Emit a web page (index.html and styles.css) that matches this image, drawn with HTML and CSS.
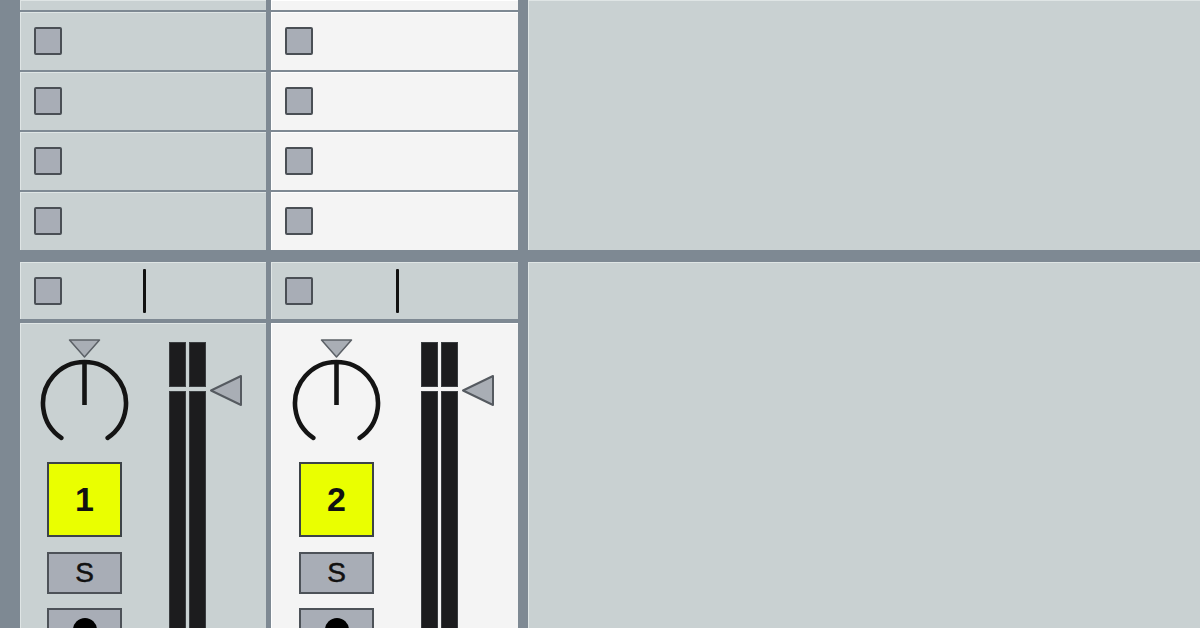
FILE: index.html
```html
<!DOCTYPE html>
<html lang="en">
<head>
  <meta charset="UTF-8">
  <meta name="viewport" content="width=device-width, initial-scale=1.0">
  <title>Session Mixer</title>
  <link rel="stylesheet" href="styles.css">
</head>
<body>
  <div class="session">

    <!-- Track 1 -->
    <div class="track">
      <div class="slots">
        <div class="slot slot-top"></div>
        <div class="slot"><span class="launch"></span></div>
        <div class="slot"><span class="launch"></span></div>
        <div class="slot"><span class="launch"></span></div>
        <div class="slot"><span class="launch"></span></div>
      </div>
      <div class="stop-row">
        <span class="launch"></span>
        <span class="stop-line"></span>
      </div>
      <div class="mixer">
        <div class="controls">
          <svg class="knob" width="92" height="104" viewBox="0 0 92 104">
            <polygon points="30.5,2 60.5,2 45.5,19" fill="#a9aeb5" stroke="#5b6066" stroke-width="1.5" stroke-linejoin="round"/>
            <path d="M 22.3 99.9 A 41.5 41.5 0 1 1 68.7 99.9" fill="none" stroke="#141414" stroke-width="4.6" stroke-linecap="round"/>
            <line x1="45.5" y1="22" x2="45.5" y2="67" stroke="#141414" stroke-width="4.6"/>
          </svg>
          <div class="track-num">1</div>
          <div class="btn">S</div>
          <div class="btn"><span class="rec-dot"></span></div>
        </div>
        <div class="meter-group">
          <div class="meter">
            <div class="meter-pair meter-peak"><span></span><span></span></div>
            <div class="meter-pair meter-body"><span></span><span></span></div>
          </div>
          <svg class="fader-arrow" width="34" height="33" viewBox="0 0 34 33">
            <polygon points="2,16.5 32,2 32,31" fill="#a9aeb5" stroke="#555a60" stroke-width="2" stroke-linejoin="round"/>
          </svg>
        </div>
      </div>
    </div>

    <!-- Track 2 (selected) -->
    <div class="track track-selected">
      <div class="slots">
        <div class="slot slot-top"></div>
        <div class="slot"><span class="launch"></span></div>
        <div class="slot"><span class="launch"></span></div>
        <div class="slot"><span class="launch"></span></div>
        <div class="slot"><span class="launch"></span></div>
      </div>
      <div class="stop-row">
        <span class="launch"></span>
        <span class="stop-line"></span>
      </div>
      <div class="mixer">
        <div class="controls">
          <svg class="knob" width="92" height="104" viewBox="0 0 92 104">
            <polygon points="30.5,2 60.5,2 45.5,19" fill="#a9aeb5" stroke="#5b6066" stroke-width="1.5" stroke-linejoin="round"/>
            <path d="M 22.3 99.9 A 41.5 41.5 0 1 1 68.7 99.9" fill="none" stroke="#141414" stroke-width="4.6" stroke-linecap="round"/>
            <line x1="45.5" y1="22" x2="45.5" y2="67" stroke="#141414" stroke-width="4.6"/>
          </svg>
          <div class="track-num">2</div>
          <div class="btn">S</div>
          <div class="btn"><span class="rec-dot"></span></div>
        </div>
        <div class="meter-group">
          <div class="meter">
            <div class="meter-pair meter-peak"><span></span><span></span></div>
            <div class="meter-pair meter-body"><span></span><span></span></div>
          </div>
          <svg class="fader-arrow" width="34" height="33" viewBox="0 0 34 33">
            <polygon points="2,16.5 32,2 32,31" fill="#a9aeb5" stroke="#555a60" stroke-width="2" stroke-linejoin="round"/>
          </svg>
        </div>
      </div>
    </div>

    <!-- Empty area to the right -->
    <div class="rest">
      <div class="rest-top"></div>
      <div class="rest-bottom"></div>
    </div>

  </div>
</body>
</html>
```

FILE: styles.css
```css
body {
  margin: 0;
  padding: 0;
  font-family: "Liberation Sans", Arial, sans-serif;
  background-color: #7e8993;
  overflow: hidden;
}

.session {
  display: flex;
  height: 628px;
  padding-left: 20px;
  background-color: #7e8993;
  overflow: hidden;
}

.track {
  width: 246px;
  display: flex;
  flex-direction: column;
}

.track-selected {
  width: 247px;
  margin-left: 5px;
}

.slots {
  display: flex;
  flex-direction: column;
  gap: 2px;
}

.slot {
  height: 58px;
  display: flex;
  align-items: center;
  padding-left: 14px;
  background-color: #c9d1d2;
  box-shadow: inset 1px 1px 0 #dfe5e5;
}

.slot-top {
  height: 10px;
}

.track-selected .slot {
  background-color: #f4f4f4;
  box-shadow: inset 1px 1px 0 #ffffff;
}

.launch {
  width: 24px;
  height: 24px;
  border: 2px solid #4a4f55;
  border-radius: 2px;
  background-color: #a8adb6;
}

.stop-row {
  height: 57px;
  margin-top: 12px;
  display: flex;
  align-items: center;
  padding-left: 14px;
  background-color: #c9d1d2;
  box-shadow: inset 1px 1px 0 #dfe5e5;
}

.stop-line {
  width: 3px;
  height: 44px;
  margin-left: 81px;
  background-color: #111;
  border-radius: 1px;
}

.track-selected .stop-line {
  margin-left: 83px;
}

.mixer {
  flex: 1;
  margin-top: 4px;
  display: flex;
  padding: 15px 0 0 27px;
  background-color: #c9d1d2;
  box-shadow: inset 1px 1px 0 #dfe5e5;
  overflow: hidden;
}

.track-selected .mixer {
  background-color: #f4f4f4;
  padding-left: 28px;
  box-shadow: inset 1px 1px 0 #ffffff;
}

.controls {
  width: 75px;
  display: flex;
  flex-direction: column;
  flex-shrink: 0;
}

.controls > * {
  flex-shrink: 0;
}

.knob {
  display: block;
  margin-left: -8px;
}

.track-num {
  height: 71px;
  margin-top: 20px;
  border: 2px solid #3d4348;
  background-color: #eaff00;
  display: flex;
  align-items: center;
  justify-content: center;
  font-size: 34px;
  font-weight: bold;
  color: #111;
}

.btn {
  height: 38px;
  margin-top: 15px;
  border: 2px solid #4d5258;
  background-color: #a8adb6;
  display: flex;
  align-items: center;
  justify-content: center;
  font-size: 28px;
  color: #111;
  -webkit-text-stroke: 0.5px #111;
}

.btn + .btn {
  margin-top: 14px;
  align-items: flex-start;
  padding-top: 8px;
  height: 30px;
}

.rec-dot {
  width: 24px;
  height: 24px;
  border-radius: 50%;
  background-color: #000;
}

.meter-group {
  display: flex;
  align-items: flex-start;
  margin-left: 47px;
  margin-top: 4px;
}

.meter {
  display: flex;
  flex-direction: column;
  gap: 4px;
  height: 320px;
}

.meter-pair {
  display: flex;
  gap: 3px;
}

.meter-pair span {
  width: 15px;
  background-color: #1c1c1e;
  border: 1px solid #3a3d40;
}

.meter-peak {
  height: 45px;
}

.meter-body {
  flex: 1;
}

.fader-arrow {
  display: block;
  margin-left: 3px;
  margin-top: 32px;
}

.rest {
  flex: 1;
  margin-left: 10px;
  display: flex;
  flex-direction: column;
  gap: 12px;
}

.rest-top {
  height: 250px;
  background-color: #c9d1d2;
  box-shadow: inset 1px 1px 0 #dfe5e5;
}

.rest-bottom {
  flex: 1;
  background-color: #c9d1d2;
  box-shadow: inset 1px 1px 0 #dfe5e5;
}
```
